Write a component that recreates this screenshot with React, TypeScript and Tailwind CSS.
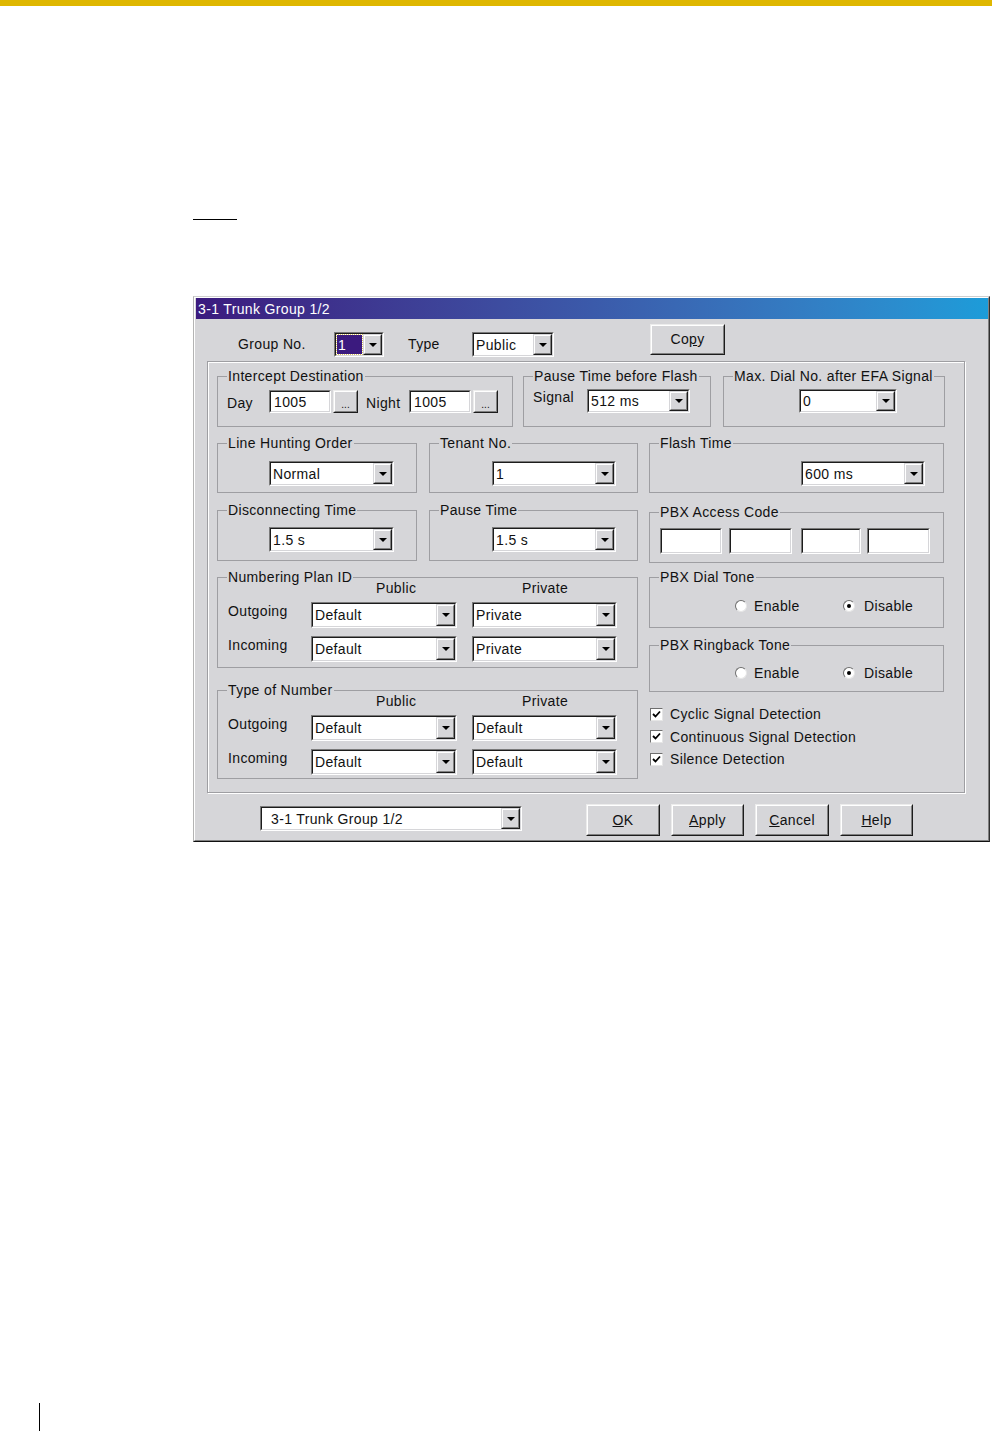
import React from "react";

const FACE = "bg-[#d6d6d9]";

function Triangle() {
  return (
    <svg width="8" height="4" viewBox="0 0 8 4">
      <polygon points="0,0 8,0 4,4" fill="#000" />
    </svg>
  );
}

function DropButton() {
  return (
    <div className="w-[19px] h-full border border-t-[#d6d6d9] border-l-[#d6d6d9] border-r-[#1c1c1c] border-b-[#1c1c1c]">
      <div className={`h-full border border-t-white border-l-white border-r-[#808080] border-b-[#808080] ${FACE} flex items-center justify-center`}>
        <Triangle />
      </div>
    </div>
  );
}

function Sunken({ className = "", children }: { className?: string; children?: React.ReactNode }) {
  return (
    <div className={`border border-t-[#7a7a7a] border-l-[#7a7a7a] border-r-white border-b-white ${className}`}>
      <div className="h-full w-full border border-t-[#1c1c1c] border-l-[#1c1c1c] border-r-[#d6d6d9] border-b-[#d6d6d9] bg-white flex">
        {children}
      </div>
    </div>
  );
}

function Combo({ className, value, pad = "pl-[2px]" }: { className: string; value: string; pad?: string }) {
  return (
    <Sunken className={className}>
      <span className={`flex-1 self-center leading-[16px] whitespace-nowrap ${pad}`}>{value}</span>
      <DropButton />
    </Sunken>
  );
}

function TextBox({ className, value = "" }: { className: string; value?: string }) {
  return (
    <Sunken className={className}>
      <span className="self-center pl-[3px] leading-[16px]">{value}</span>
    </Sunken>
  );
}

function Button({ className, children }: { className: string; children: React.ReactNode }) {
  return (
    <div className={`border border-t-[#ececec] border-l-[#ececec] border-r-[#1c1c1c] border-b-[#1c1c1c] ${className}`}>
      <div className={`h-full border border-t-white border-l-white border-r-[#808080] border-b-[#808080] ${FACE} flex items-center justify-center`}>
        {children}
      </div>
    </div>
  );
}

function DotButton() {
  return (
    <Button className="ml-[2px] w-[25px] h-[23px]">
      <span className="text-[10px] leading-none mt-[6px] tracking-normal">...</span>
    </Button>
  );
}

function Group({ label, className, children }: { label: string; className: string; children?: React.ReactNode }) {
  return (
    <fieldset className={`border border-[#9e9ea2] ${className}`}>
      <legend className="ml-[9px] px-[1px] leading-[16px] whitespace-nowrap">{label}</legend>
      {children}
    </fieldset>
  );
}

function Radio({ checked = false }: { checked?: boolean }) {
  return (
    <div className="w-[12px] h-[12px] rounded-full bg-white border border-t-[#6e6e6e] border-l-[#6e6e6e] border-r-[#e6e6e6] border-b-[#e6e6e6] flex items-center justify-center">
      {checked && <div className="w-[4px] h-[4px] rounded-full bg-black" />}
    </div>
  );
}

function Check({ label }: { label: string }) {
  return (
    <div className="flex items-center h-[22.5px]">
      <div className="ml-[1px] w-[13px] h-[13px] bg-white border border-t-[#6e6e6e] border-l-[#6e6e6e] border-r-[#e6e6e6] border-b-[#e6e6e6] flex items-center justify-center">
        <svg width="9" height="9" viewBox="0 0 9 9">
          <path d="M1 4 L3.5 6.5 L8 1.5" stroke="#000" strokeWidth="1.8" fill="none" />
        </svg>
      </div>
      <span className="ml-[7px] leading-[16px]">{label}</span>
    </div>
  );
}

function PlanRows({ rows }: { rows: [string, string, string][] }) {
  return (
    <>
      <div className="flex -mt-[5px] h-[16px] leading-[16px]">
        <span className="ml-[158px] w-[40px]">Public</span>
        <span className="ml-[106px]">Private</span>
      </div>
      {rows.map(([name, pub, priv], i) => (
        <div key={name} className={`flex items-start ${i === 0 ? "mt-[6px]" : "mt-[8px]"}`}>
          <span className="pl-[10px] w-[93px] mt-[1px] leading-[16px]">{name}</span>
          <Combo className="w-[146px] h-[26px]" value={pub} />
          <Combo className="ml-[15px] w-[145px] h-[26px]" value={priv} />
        </div>
      ))}
    </>
  );
}

export default function App() {
  return (
    <div className="min-h-[1431px] w-full bg-white flex flex-col font-['Liberation_Sans',Arial,sans-serif] text-[14px] tracking-[0.35px] text-[#111]">
      <div className="h-[6px] bg-[#dfb700]" />
      <div className="ml-[193px] mt-[213px] w-[44px] h-px bg-black" />

      {/* dialog */}
      <div className="ml-[193px] mt-[76px] w-[797px] h-[546px] border border-t-[#cfcfcf] border-l-[#b4b4b4] border-r-[#303030] border-b-[#101010]">
        <div className={`h-full border border-t-white border-l-white border-r-[#808080] border-b-[#808080] ${FACE} pl-[1px] flex flex-col`}>
          <div className="h-[21px] bg-linear-to-r from-[#3b1a7e] via-[#3b5aaa] to-[#1c9cd9] text-white pl-[2px] flex items-center leading-[16px]">
            3-1 Trunk Group 1/2
          </div>

          <div className="pl-[11px] pt-[5px] flex flex-col">
            {/* top row */}
            <div className="flex items-start h-[33px]">
              <span className="ml-[31px] mt-[12px] w-[96px] leading-[16px]">Group No.</span>
              <Sunken className="mt-[8px] w-[50px] h-[25px]">
                <div className="flex-1 flex items-center p-[1px]">
                  <span className="w-[25px] h-full bg-[#3b1a7e] text-white leading-[16px] pl-[1px] outline-1 outline-dotted outline-[#d8c060] flex items-center">1</span>
                </div>
                <DropButton />
              </Sunken>
              <span className="ml-[24px] mt-[12px] w-[64px] leading-[16px]">Type</span>
              <Combo className="mt-[8px] w-[82px] h-[25px]" value="Public" />
              <Button className="ml-[96px] w-[75px] h-[31px]">
                <span>
                  Co<span className="underline">p</span>y
                </span>
              </Button>
            </div>

            {/* main etched box */}
            <div className="mt-[4px] w-[758px] h-[432px] border border-[#9e9ea2] shadow-[1px_1px_0_#fff,inset_1px_1px_0_#fff] pl-[9px] pt-[6px] flex flex-col">
              <div className="flex">
                <Group label="Intercept Destination" className="w-[296px] h-[59px]">
                  <div className="flex items-center mt-[6px] pl-[9px]">
                    <span className="w-[42px] leading-[16px] mt-[3px]">Day</span>
                    <TextBox className="w-[62px] h-[23px]" value="1005" />
                    <DotButton />
                    <span className="ml-[8px] w-[43px] leading-[16px] mt-[3px]">Night</span>
                    <TextBox className="w-[62px] h-[23px]" value="1005" />
                    <DotButton />
                  </div>
                </Group>
                <Group label="Pause Time before Flash" className="ml-[10px] w-[188px] h-[59px]">
                  <div className="flex items-start mt-[5px] pl-[9px]">
                    <span className="w-[54px] leading-[16px]">Signal</span>
                    <Combo className="w-[103px] h-[24px]" value="512 ms" />
                  </div>
                </Group>
                <Group label="Max. Dial No. after EFA Signal" className="ml-[12px] w-[222px] h-[59px]">
                  <div className="flex mt-[5px] pl-[75px]">
                    <Combo className="w-[98px] h-[24px]" value="0" />
                  </div>
                </Group>
              </div>

              <div className="flex mt-[8px]">
                {/* left column */}
                <div className="w-[421px] flex flex-col">
                  <div className="flex">
                    <Group label="Line Hunting Order" className="w-[200px] h-[58px]">
                      <div className="flex mt-[10px] pl-[51px]">
                        <Combo className="w-[125px] h-[25px]" value="Normal" />
                      </div>
                    </Group>
                    <Group label="Tenant No." className="ml-[12px] w-[209px] h-[58px]">
                      <div className="flex mt-[10px] pl-[62px]">
                        <Combo className="w-[124px] h-[25px]" value="1" />
                      </div>
                    </Group>
                  </div>
                  <div className="flex mt-[9px]">
                    <Group label="Disconnecting Time" className="w-[200px] h-[59px]">
                      <div className="flex mt-[9px] pl-[51px]">
                        <Combo className="w-[125px] h-[25px]" value="1.5 s" />
                      </div>
                    </Group>
                    <Group label="Pause Time" className="ml-[12px] w-[209px] h-[59px]">
                      <div className="flex mt-[9px] pl-[62px]">
                        <Combo className="w-[124px] h-[25px]" value="1.5 s" />
                      </div>
                    </Group>
                  </div>
                  <Group label="Numbering Plan ID" className="mt-[8px] w-[421px] h-[99px]">
                    <PlanRows
                      rows={[
                        ["Outgoing", "Default", "Private"],
                        ["Incoming", "Default", "Private"],
                      ]}
                    />
                  </Group>
                  <Group label="Type of Number" className="mt-[14px] w-[421px] h-[97px]">
                    <PlanRows
                      rows={[
                        ["Outgoing", "Default", "Default"],
                        ["Incoming", "Default", "Default"],
                      ]}
                    />
                  </Group>
                </div>

                {/* right column */}
                <div className="ml-[11px] w-[295px] flex flex-col">
                  <Group label="Flash Time" className="w-[295px] h-[58px]">
                    <div className="flex mt-[10px] pl-[151px]">
                      <Combo className="w-[124px] h-[25px]" value="600 ms" />
                    </div>
                  </Group>
                  <Group label="PBX Access Code" className="mt-[11px] w-[295px] h-[59px]">
                    <div className="flex mt-[8px] pl-[10px]">
                      <TextBox className="w-[62px] h-[26px]" />
                      <TextBox className="ml-[7px] w-[63px] h-[26px]" />
                      <TextBox className="ml-[9px] w-[60px] h-[26px]" />
                      <TextBox className="ml-[6px] w-[63px] h-[26px]" />
                    </div>
                  </Group>
                  <Group label="PBX Dial Tone" className="mt-[6px] w-[295px] h-[59px]">
                    <div className="flex items-center mt-[13px] h-[16px] pl-[85px]">
                      <Radio />
                      <span className="ml-[7px] w-[89px] leading-[16px]">Enable</span>
                      <Radio checked />
                      <span className="ml-[9px] leading-[16px]">Disable</span>
                    </div>
                  </Group>
                  <Group label="PBX Ringback Tone" className="mt-[9px] w-[295px] h-[55px]">
                    <div className="flex items-center mt-[12px] h-[16px] pl-[85px]">
                      <Radio />
                      <span className="ml-[7px] w-[89px] leading-[16px]">Enable</span>
                      <Radio checked />
                      <span className="ml-[9px] leading-[16px]">Disable</span>
                    </div>
                  </Group>
                  <div className="mt-[11px] flex flex-col">
                    <Check label="Cyclic Signal Detection" />
                    <Check label="Continuous Signal Detection" />
                    <Check label="Silence Detection" />
                  </div>
                </div>
              </div>
            </div>

            {/* bottom row */}
            <div className="flex items-start mt-[11px]">
              <Combo className="ml-[53px] mt-[2px] w-[262px] h-[25px]" value="3-1 Trunk Group 1/2" pad="pl-[9px]" />
              <Button className="ml-[64px] w-[74px] h-[32px]">
                <span>
                  <span className="underline">O</span>K
                </span>
              </Button>
              <Button className="ml-[11px] w-[73px] h-[32px]">
                <span>
                  <span className="underline">A</span>pply
                </span>
              </Button>
              <Button className="ml-[11px] w-[74px] h-[32px]">
                <span>
                  <span className="underline">C</span>ancel
                </span>
              </Button>
              <Button className="ml-[11px] w-[73px] h-[32px]">
                <span>
                  <span className="underline">H</span>elp
                </span>
              </Button>
            </div>
          </div>
        </div>
      </div>

      <div className="mt-auto ml-[39px] w-px h-[28px] bg-black" />
    </div>
  );
}
